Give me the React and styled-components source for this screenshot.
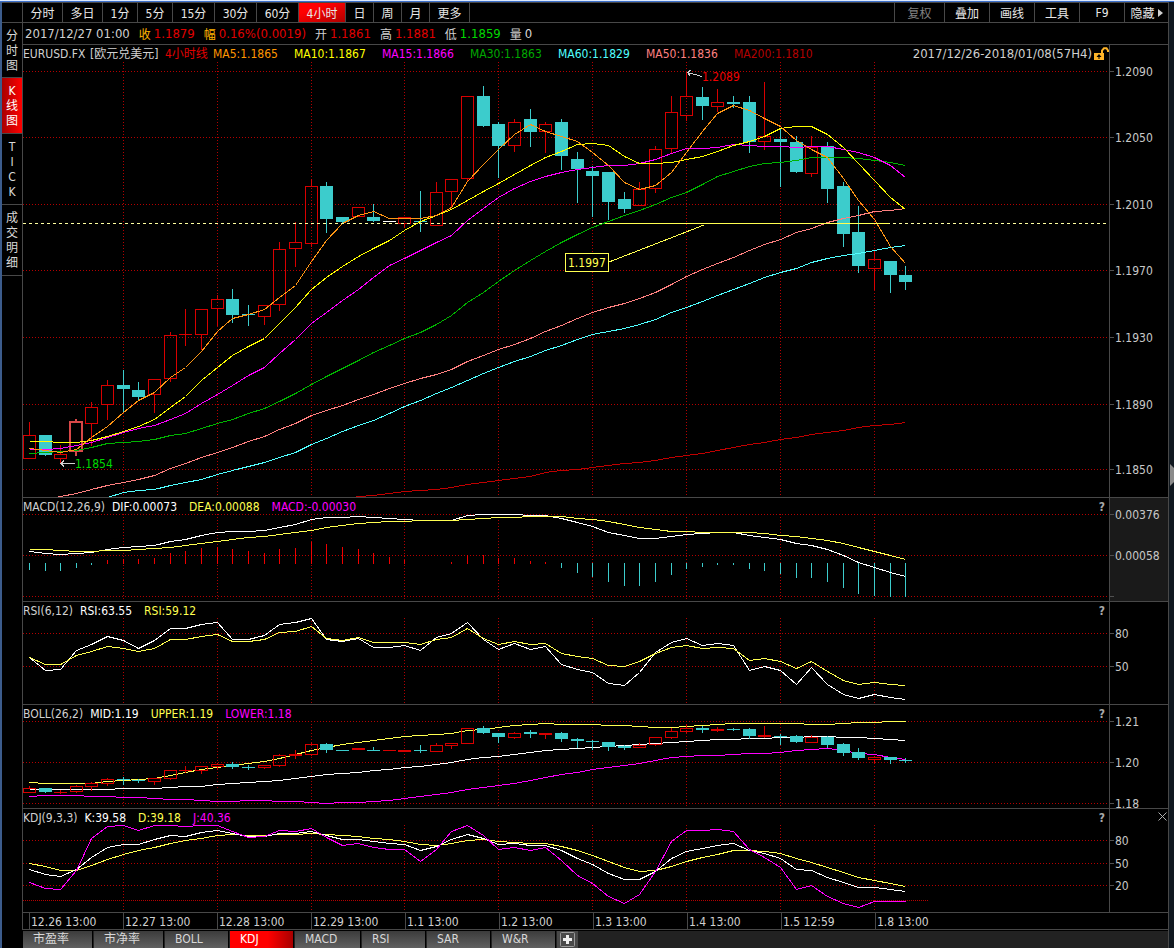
import React, { useState } from "react";
import styled, { createGlobalStyle } from "styled-components";

const FONT = `"DejaVu Sans Condensed", "Noto Sans CJK SC", sans-serif`;

const X0 = 28.87;
const STEP = 15.65;
const LEFT = 23;
const barX = (i) => Math.round(X0 + STEP * i) - LEFT;

const periods = [
  { label: "分时", w: 40 },
  { label: "多日", w: 40 },
  { label: "1分", w: 35 },
  { label: "5分", w: 35 },
  { label: "15分", w: 42 },
  { label: "30分", w: 42 },
  { label: "60分", w: 42 },
  { label: "4小时", w: 47 },
  { label: "日", w: 28 },
  { label: "周", w: 28 },
  { label: "月", w: 28 },
  { label: "更多", w: 40 },
];

const tools = [
  { label: "复权", w: 50, dim: true },
  { label: "叠加", w: 45 },
  { label: "画线", w: 45 },
  { label: "工具", w: 45 },
  { label: "F9", w: 45 },
  { label: "隐藏", w: 44, arrow: true },
];

const views = ["分时图", "K线图", "TICK", "成交明细"];

const quote = [
  { label: "收", value: "1.1879", color: "#e00000", labelColor: "#ffb400" },
  { label: "幅", value: "0.16%(0.0019)", color: "#e00000", labelColor: "#ffb400" },
  { label: "开", value: "1.1861", color: "#e00000" },
  { label: "高", value: "1.1881", color: "#e00000" },
  { label: "低", value: "1.1859", color: "#00d800" },
  { label: "量", value: "0", color: "#d8d8d8" },
];

const dates = [
  "12.26 13:00",
  "12.27 13:00",
  "12.28 13:00",
  "12.29 13:00",
  "1.1 13:00",
  "1.2 13:00",
  "1.3 13:00",
  "1.4 13:00",
  "1.5 12:59",
  "1.8 13:00",
];

const tabs = [
  { label: "市盈率", w: 70 },
  { label: "市净率", w: 70 },
  { label: "BOLL", w: 64 },
  { label: "KDJ", w: 64 },
  { label: "MACD", w: 66 },
  { label: "RSI", w: 64 },
  { label: "SAR", w: 64 },
  { label: "W&R", w: 64 },
];

// [type, high, body top, body bottom, low]
const candles = [
  ["r", 422, 435, 458, 458],
  ["c", 435, 435, 455, 455],
  ["r", 445, 454, 458, 463],
  ["s", 419, 422, 451, 455],
  ["r", 402, 407, 423, 445],
  ["r", 380, 385, 404, 419],
  ["c", 370, 385, 389, 411],
  ["c", 382, 390, 397, 399],
  ["r", 379, 379, 394, 412],
  ["r", 332, 335, 378, 381],
  ["r", 309, 334, 334, 345],
  ["r", 309, 309, 334, 349],
  ["r", 295, 299, 308, 325],
  ["c", 289, 299, 315, 322],
  ["c", 305, 314, 315, 325],
  ["r", 305, 305, 316, 324],
  ["r", 242, 249, 304, 310],
  ["r", 222, 242, 248, 266],
  ["r", 179, 186, 243, 246],
  ["c", 182, 186, 219, 232],
  ["c", 217, 217, 222, 222],
  ["r", 207, 207, 216, 216],
  ["c", 204, 217, 221, 221],
  ["w", 221, 221, 222, 221],
  ["r", 217, 217, 223, 227],
  ["c", 191, 221, 222, 231],
  ["r", 182, 192, 225, 225],
  ["r", 179, 179, 191, 207],
  ["r", 96, 96, 178, 181],
  ["c", 86, 96, 126, 126],
  ["c", 122, 124, 146, 177],
  ["r", 119, 122, 145, 151],
  ["c", 109, 119, 132, 146],
  ["r", 122, 124, 131, 152],
  ["c", 119, 122, 156, 169],
  ["c", 152, 159, 169, 202],
  ["c", 166, 171, 176, 216],
  ["c", 172, 172, 202, 219],
  ["c", 192, 199, 209, 212],
  ["r", 182, 189, 205, 205],
  ["r", 146, 149, 188, 192],
  ["r", 96, 112, 148, 153],
  ["r", 72, 96, 115, 120],
  ["c", 87, 97, 106, 119],
  ["r", 89, 102, 106, 111],
  ["c", 96, 102, 104, 107],
  ["c", 96, 102, 142, 152],
  ["r", 82, 136, 141, 149],
  ["c", 128, 139, 142, 186],
  ["c", 136, 142, 172, 172],
  ["r", 136, 147, 173, 176],
  ["c", 142, 146, 189, 202],
  ["c", 182, 186, 234, 246],
  ["c", 206, 232, 266, 272],
  ["r", 251, 259, 268, 289],
  ["c", 261, 261, 275, 292],
  ["c", 266, 275, 282, 289],
];

const toBoll = (y) => Math.round(744 + (y - 186) * 0.1775);
const bollCandles = candles.map(([t, ...v]) => [
  t === "s" || t === "w" ? "r" : t,
  ...v.map(toBoll),
]);

const maLines = [
  { color: "#c00000", from: 20, ys: [499, 496, 495, 493, 491, 490, 489, 487, 484, 482, 480, 478, 476, 472, 470, 469, 467, 465, 463, 462, 460, 457, 455, 453, 450, 447, 444, 442, 439, 437, 434, 432, 430, 427, 425, 424, 422] },
  { color: "#ff8080", from: 1, ys: [499, 496, 493, 489, 485, 482, 479, 475, 468, 463, 457, 452, 447, 441, 436, 429, 423, 415, 410, 405, 399, 394, 388, 383, 378, 374, 369, 361, 355, 349, 344, 338, 331, 325, 318, 312, 307, 303, 298, 292, 284, 276, 269, 263, 257, 250, 244, 239, 232, 228, 222, 218, 215, 211, 210, 208] },
  { color: "#50ffff", from: 5, ys: [497, 492, 490, 489, 485, 482, 479, 474, 470, 466, 462, 457, 452, 444, 438, 431, 425, 420, 413, 406, 400, 393, 387, 380, 373, 367, 361, 356, 350, 345, 339, 334, 331, 328, 324, 319, 312, 307, 301, 295, 289, 283, 277, 272, 268, 262, 258, 255, 253, 250, 247, 245] },
  { color: "#00b400", from: 0, ys: [453, 452, 451, 450, 447, 443, 442, 441, 439, 435, 433, 428, 423, 419, 413, 408, 401, 393, 384, 376, 368, 360, 352, 345, 338, 332, 324, 315, 302, 292, 281, 270, 260, 251, 242, 234, 227, 221, 215, 210, 204, 197, 192, 184, 176, 171, 166, 163, 162, 160, 157, 157, 157, 158, 160, 162, 165] },
  { color: "#ff00ff", from: 0, ys: [449, 449, 448, 445, 442, 437, 432, 428, 425, 419, 413, 403, 394, 385, 375, 367, 353, 339, 323, 312, 300, 289, 277, 265, 258, 250, 242, 235, 220, 208, 197, 188, 181, 176, 172, 169, 167, 165, 165, 163, 159, 153, 148, 148, 147, 144, 145, 146, 146, 147, 146, 146, 149, 152, 157, 165, 177] },
  { color: "#ffff00", from: 0, ys: [441, 441, 442, 442, 440, 436, 431, 426, 419, 407, 396, 380, 367, 355, 346, 338, 323, 307, 289, 277, 266, 256, 248, 240, 230, 221, 215, 209, 200, 191, 183, 174, 165, 157, 151, 144, 143, 145, 156, 163, 163, 162, 159, 156, 151, 145, 141, 136, 128, 126, 126, 134, 147, 163, 180, 197, 209] },
  { color: "#ff9614", from: 0, ys: [448, 450, 452, 449, 437, 426, 412, 400, 392, 377, 367, 351, 331, 318, 314, 309, 297, 285, 261, 240, 223, 215, 211, 218, 218, 218, 215, 207, 181, 164, 149, 134, 124, 131, 136, 141, 152, 165, 182, 189, 185, 172, 152, 131, 113, 105, 110, 118, 126, 140, 149, 157, 178, 200, 219, 246, 263] },
];

const macdLines = [
  { color: "#ffffff", ys: [551, 553, 554, 553, 552, 549, 547, 546, 545, 541, 539, 535, 532, 531, 531, 530, 527, 524, 519, 517, 517, 516, 517, 518, 519, 520, 520, 520, 515, 514, 514, 514, 515, 515, 518, 522, 526, 532, 535, 538, 538, 536, 534, 533, 532, 532, 535, 537, 539, 543, 545, 549, 555, 562, 567, 572, 576] },
  { color: "#ffff50", ys: [549, 549, 550, 551, 551, 550, 550, 549, 548, 547, 545, 543, 541, 539, 537, 536, 534, 532, 530, 527, 525, 523, 522, 521, 521, 520, 520, 520, 519, 518, 517, 517, 516, 516, 516, 518, 519, 521, 524, 527, 529, 531, 531, 532, 532, 532, 532, 533, 535, 536, 538, 540, 543, 547, 551, 555, 559] },
];

// bar ends; 563 is the zero line
const macdBars = [569, 570, 570, 567, 564, 560, 559, 559, 558, 553, 551, 548, 547, 549, 551, 553, 549, 548, 542, 544, 547, 549, 553, 557, 560, 563, 563, 562, 555, 555, 558, 558, 561, 562, 567, 572, 576, 581, 585, 585, 581, 574, 568, 566, 564, 564, 568, 570, 573, 577, 577, 581, 587, 593, 595, 596, 596];

const rsiLines = [
  { color: "#ffffff", ys: [657, 670, 669, 650, 644, 636, 640, 648, 640, 628, 628, 624, 622, 639, 639, 635, 624, 622, 618, 639, 641, 638, 647, 647, 645, 650, 637, 633, 622, 639, 649, 643, 649, 646, 664, 669, 672, 683, 685, 672, 652, 642, 638, 645, 643, 645, 670, 666, 670, 684, 667, 684, 694, 698, 694, 697, 699] },
  { color: "#ffff50", ys: [657, 664, 664, 655, 651, 646, 648, 651, 648, 639, 639, 636, 634, 641, 641, 639, 632, 631, 626, 638, 640, 637, 642, 642, 642, 644, 639, 637, 628, 638, 644, 641, 644, 643, 653, 656, 658, 665, 666, 661, 653, 647, 645, 648, 647, 648, 660, 658, 661, 668, 661, 671, 680, 684, 682, 684, 685] },
];

const bollLines = [
  { color: "#ffff50", ys: [782, 783, 783, 783, 783, 781, 780, 779, 778, 775, 772, 769, 767, 765, 763, 761, 758, 754, 750, 747, 744, 742, 740, 738, 736, 735, 734, 733, 730, 729, 727, 725, 724, 723, 724, 724, 724, 725, 725, 726, 727, 727, 726, 725, 724, 723, 723, 723, 723, 723, 724, 724, 723, 722, 722, 721, 721] },
  { color: "#ffffff", ys: [789, 789, 789, 789, 789, 789, 788, 788, 788, 787, 786, 786, 784, 783, 782, 781, 780, 778, 776, 774, 773, 772, 770, 769, 767, 766, 764, 762, 759, 757, 756, 754, 752, 750, 749, 748, 747, 746, 745, 744, 743, 742, 741, 740, 739, 739, 738, 738, 737, 737, 736, 736, 737, 737, 738, 739, 740] },
  { color: "#ff00ff", ys: [796, 795, 795, 795, 796, 796, 797, 797, 798, 799, 799, 800, 801, 801, 800, 800, 801, 801, 802, 803, 802, 802, 801, 800, 798, 796, 794, 792, 789, 787, 785, 783, 780, 777, 774, 772, 769, 767, 765, 763, 760, 757, 756, 755, 755, 754, 753, 753, 752, 750, 749, 748, 750, 753, 754, 757, 759] },
];

const kdjLines = [
  { color: "#ffff50", ys: [863, 866, 870, 870, 865, 859, 854, 850, 847, 843, 840, 838, 835, 834, 835, 835, 834, 834, 833, 834, 835, 836, 838, 839, 841, 844, 845, 843, 840, 839, 841, 842, 843, 843, 846, 850, 855, 861, 867, 871, 870, 866, 861, 857, 854, 850, 850, 851, 853, 858, 862, 867, 872, 877, 880, 883, 886] },
  { color: "#ffffff", ys: [869, 874, 876, 869, 857, 847, 844, 844, 839, 835, 836, 832, 830, 833, 836, 836, 833, 833, 831, 835, 839, 839, 841, 843, 844, 850, 846, 839, 834, 838, 844, 843, 845, 845, 850, 858, 864, 873, 879, 879, 871, 858, 851, 848, 845, 843, 850, 853, 858, 869, 870, 877, 882, 887, 887, 889, 891] },
  { color: "#ff00ff", ys: [882, 888, 889, 870, 838, 826, 825, 830, 825, 825, 826, 825, 825, 831, 837, 836, 830, 831, 828, 837, 845, 843, 847, 849, 849, 861, 849, 831, 825, 835, 849, 847, 850, 847, 860, 875, 883, 896, 903, 894, 871, 841, 830, 830, 829, 831, 849, 857, 867, 889, 885, 896, 903, 907, 901, 901, 901] },
];

function Grid({ top, height, rows, from = 0 }) {
  return (
    <g stroke="#b40000" strokeDasharray="1 2">
      {rows.map((y) => (
        <line key={y} x1="0" x2="100%" y1={y - top + 0.5} y2={y - top + 0.5} />
      ))}
      {dates.slice(1).map((d, i) => {
        const x = barX((i + 1) * 6) + 0.5;
        return <line key={d} x1={x} x2={x} y1={from} y2={height} />;
      })}
    </g>
  );
}

function Lines({ top, lines }) {
  return lines.map(({ color, ys, from = 0 }) => (
    <polyline
      key={color}
      fill="none"
      stroke={color}
      points={ys.map((y, i) => `${barX(i + from) + 0.5},${y - top + 0.5}`).join(" ")}
    />
  ));
}

function Candles({ top, data }) {
  return data.map(([type, hi, a, b, lo], i) => {
    const x = barX(i);
    const y = (v) => v - top;
    if (type === "w") {
      return <rect key={i} x={x - 6} y={y(a)} width="13" height="1" fill="#fff" />;
    }
    if (type === "c") {
      return (
        <g key={i} fill="#3ccccc">
          <rect x={x} y={y(hi)} width="1" height={lo - hi + 1} />
          <rect x={x - 6} y={y(a)} width="13" height={Math.max(b - a, 1)} />
        </g>
      );
    }
    if (type === "s") {
      return (
        <g key={i} stroke="#d84848" strokeWidth="2" fill="none">
          <line x1={x} x2={x} y1={y(hi)} y2={y(a)} />
          <line x1={x} x2={x} y1={y(b)} y2={y(lo) + 1} />
          <rect x={x - 6} y={y(a)} width="12" height={b - a} />
        </g>
      );
    }
    return (
      <g key={i} stroke="#d80000" fill="none">
        <line x1={x + 0.5} x2={x + 0.5} y1={y(hi)} y2={y(a)} />
        <line x1={x + 0.5} x2={x + 0.5} y1={y(b)} y2={y(lo) + 1} />
        <rect x={x - 5.5} y={y(a) + 0.5} width="12" height={Math.max(b - a, 0.1)} />
      </g>
    );
  });
}

function Panel({ top, height, title, titleExtra, rows, labels, active, close, from, help = true, children }) {
  return (
    <PanelRow>
      <Plot>
        <PanelHead>
          {title}
          {help && <HelpButton aria-label="指标说明">?</HelpButton>}
          {titleExtra}
        </PanelHead>
        <Canvas height={height} shapeRendering="crispEdges">
          <Grid top={top} height={height} rows={rows} from={from} />
          {children}
        </Canvas>
      </Plot>
      <Scale $active={active}>
        {close && (
          <CloseButton aria-label="关闭">
            <svg width="9" height="9" stroke="#b0b0b0">
              <path d="M0.5 0.5L8.5 8.5M8.5 0.5L0.5 8.5" />
            </svg>
          </CloseButton>
        )}
        <ScaleCanvas height={height}>
          {labels.map(([y, text]) => (
            <g key={y}>
              <rect x="0" y={y - top} width="4" height="1" fill="#505050" />
              <text x="5" y={y - top + 5} fill="#c8c8c8">
                {text}
              </text>
            </g>
          ))}
        </ScaleCanvas>
      </Scale>
    </PanelRow>
  );
}

const LockIcon = () => (
  <svg width="15" height="14" viewBox="0 0 15 14">
    <path d="M8 6V3.5L10 1.2H12.5L14 3.5V5" fill="none" stroke="#ffb428" strokeWidth="2" />
    <rect x="0" y="6" width="10" height="7" fill="#ffb428" />
    <path d="M5 7L7.5 10H2.5ZM4.5 9H5.5V12H4.5Z" fill="#000" />
  </svg>
);

export default function App() {
  const [period, setPeriod] = useState("4小时");
  const [view, setView] = useState("K线图");
  const [tab, setTab] = useState("KDJ");

  return (
    <>
      <GlobalStyle />
      <TopStrip />
      <Window>
        <Side>
          {views.map((v) => (
            <SideButton key={v} $on={v === view} onClick={() => setView(v)}>
              {[...v].map((ch, i) => (
                <span key={i}>{ch}</span>
              ))}
            </SideButton>
          ))}
        </Side>
        <Main>
          <Toolbar>
            {periods.map(({ label, w }) => (
              <ToolButton key={label} $w={w} $on={label === period} onClick={() => setPeriod(label)}>
                {label}
              </ToolButton>
            ))}
            <Spacer />
            {tools.map(({ label, w, dim, arrow }) => (
              <ToolButton key={label} $w={w} $dim={dim} $right>
                {label}
                {arrow && (
                  <svg width="5" height="8">
                    <path d="M0 0L5 4L0 8Z" fill="#d0d0d0" />
                  </svg>
                )}
              </ToolButton>
            ))}
          </Toolbar>

          <QuoteBar>
            <QuoteItem>2017/12/27 01:00</QuoteItem>
            {quote.map((q) => (
              <QuoteItem key={q.label} $color={q.color}>
                <Cjk $color={q.labelColor || "#d0d0d0"}>{q.label}</Cjk>
                {q.value}
              </QuoteItem>
            ))}
          </QuoteBar>

          <Panel
            top={61}
            height={436}
            from={-2}
            help={false}
            rows={[71, 137, 204, 270, 337, 404, 469]}
            labels={[
              [71, "1.2090"],
              [137, "1.2050"],
              [204, "1.2010"],
              [270, "1.1970"],
              [337, "1.1930"],
              [404, "1.1890"],
              [469, "1.1850"],
            ]}
            title={
              <>
                <Symbol>EURUSD.FX</Symbol>
                <Name>[欧元兑美元]</Name>
                <Name $color="#e00000">4小时线</Name>
                <MaLabel $color="#ff9600" $short>MA5:1.1865</MaLabel>
                <MaLabel $color="#ffff00">MA10:1.1867</MaLabel>
                <MaLabel $color="#ff00ff">MA15:1.1866</MaLabel>
                <MaLabel $color="#00a800">MA30:1.1863</MaLabel>
                <MaLabel $color="#50ffff">MA60:1.1829</MaLabel>
                <MaLabel $color="#ff8080">MA50:1.1836</MaLabel>
                <MaLabel $color="#b40000">MA200:1.1810</MaLabel>
              </>
            }
            titleExtra={
              <Range>
                2017/12/26-2018/01/08(57H4)
                <LockIcon />
              </Range>
            }
          >
            <Candles top={61} data={candles} />
            <Lines top={61} lines={maLines} />
            <line x1="0" x2="100%" y1="162.5" y2="162.5" stroke="#ffffa0" strokeDasharray="3 3" />
            <line x1="582" x2="866" y1="162.5" y2="162.5" stroke="#ffff50" />
            <line x1="586" x2="681" y1="201" y2="164" stroke="#ffff50" />
            <rect x="542.5" y="192.5" width="43" height="18" fill="#000" stroke="#ffff50" />
            <text x="545" y="206" fill="#ffff50">1.1997</text>
            <path d="M664.5 11.5L679 15.5M668 9L664.5 11.5L667 15" fill="none" stroke="#d0d0d0" />
            <text x="679" y="20" fill="#f00000">1.2089</text>
            <path d="M38 402.5H52M41 399.5L38 402.5L41 405.5" fill="none" stroke="#d0d0d0" />
            <text x="52" y="407" fill="#00d800">1.1854</text>
          </Panel>

          <Panel
            top={514}
            height={87}
            active
            rows={[514, 555, 596]}
            labels={[
              [514, "0.00376"],
              [555, "0.00058"],
              [596, ""],
            ]}
            title={
              <>
                <Label>MACD(12,26,9)</Label>
                <Value $color="#fff">DIF:0.00073</Value>
                <Value $color="#ffff50">DEA:0.00088</Value>
                <Value $color="#ff00ff">MACD:-0.00030</Value>
              </>
            }
          >
            {macdBars.map((y, i) =>
              y === 563 ? null : (
                <rect
                  key={i}
                  x={barX(i)}
                  y={Math.min(y, 563) - 514}
                  width="1"
                  height={Math.abs(y - 563) + 1}
                  fill={y < 563 ? "#f00000" : "#3ccccc"}
                />
              )
            )}
            <Lines top={514} lines={macdLines} />
          </Panel>

          <Panel
            top={618}
            height={86}
            rows={[633, 666]}
            labels={[
              [633, "80"],
              [666, "50"],
            ]}
            title={
              <>
                <Label>RSI(6,12)</Label>
                <Value $color="#fff">RSI:63.55</Value>
                <Value $color="#ffff50">RSI:59.12</Value>
              </>
            }
          >
            <Lines top={618} lines={rsiLines} />
          </Panel>

          <Panel
            top={721}
            height={87}
            rows={[721, 762, 803]}
            labels={[
              [721, "1.21"],
              [762, "1.20"],
              [803, "1.18"],
            ]}
            title={
              <>
                <Label>BOLL(26,2)</Label>
                <Value $color="#fff">MID:1.19</Value>
                <Value $color="#ffff50">UPPER:1.19</Value>
                <Value $color="#ff00ff">LOWER:1.18</Value>
              </>
            }
          >
            <Lines top={721} lines={bollLines} />
            <Candles top={721} data={bollCandles} />
          </Panel>

          <Panel
            top={825}
            height={87}
            close
            rows={[840, 863, 885]}
            labels={[
              [840, "80"],
              [863, "50"],
              [885, "20"],
            ]}
            title={
              <>
                <Label>KDJ(9,3,3)</Label>
                <Value $color="#fff">K:39.58</Value>
                <Value $color="#ffff50">D:39.18</Value>
                <Value $color="#ff00ff">J:40.36</Value>
              </>
            }
          >
            <line x1="0" x2="905" y1="75.5" y2="75.5" stroke="#b40000" strokeDasharray="1 1" />
            <Lines top={825} lines={kdjLines} />
          </Panel>

          <DateAxis>
            {dates.map((d) => (
              <DateCell key={d}>{d}</DateCell>
            ))}
          </DateAxis>

          <TabBar>
            {tabs.map(({ label, w }) => (
              <Tab key={label} $w={w} $on={label === tab} onClick={() => setTab(label)}>
                {label}
              </Tab>
            ))}
            <AddTab aria-label="添加指标">
              <svg width="15" height="15">
                <rect x="0.5" y="0.5" width="14" height="14" rx="1" fill="#4a4a4a" stroke="#999" />
                <path d="M7.5 3V12M3 7.5H12" stroke="#eee" strokeWidth="3" />
              </svg>
            </AddTab>
          </TabBar>
        </Main>
        <Splitter aria-label="展开侧栏">
          <svg width="4" height="22">
            <path d="M0 0L4 4V18L0 22Z" fill="#8a8a8a" />
          </svg>
        </Splitter>
      </Window>
    </>
  );
}

const GlobalStyle = createGlobalStyle`
  * {
    box-sizing: border-box;
  }
  body {
    margin: 0;
    background: #000;
    color: #d0d0d0;
    font-family: ${FONT};
    font-size: 12px;
  }
  button {
    margin: 0;
    padding: 0;
    border: 0;
    background: none;
    color: inherit;
    font: inherit;
    cursor: pointer;
  }
  svg {
    display: block;
    flex: none;
  }
`;

const TopStrip = styled.div`
  height: 2px;
  background: linear-gradient(#dce8fc 50%, #3c70cc 50%);
`;

const Window = styled.div`
  display: flex;
  min-height: calc(100vh - 2px);
  border-left: 2px solid #3c5c8c;
`;

const Side = styled.nav`
  flex: 0 0 20px;
  padding-top: 19px;
  border-top: 1px solid #484848;
  display: flex;
  flex-direction: column;
`;

const SideButton = styled.button`
  display: flex;
  flex-direction: column;
  align-items: center;
  padding: 6px 0 4px;
  line-height: 15px;
  border-bottom: 1px solid #484848;
  color: ${(props) => (props.$on ? "#fff" : "#d8d8d8")};
  background: ${(props) =>
    props.$on ? "linear-gradient(90deg, #a80000, #ff0000)" : "none"};

  &:first-child {
    border-top: 1px solid #484848;
    padding-bottom: 3px;
  }
`;

const Main = styled.main`
  flex: 1;
  min-width: 0;
  border-right: 1px solid #484848;
`;

const Toolbar = styled.div`
  display: flex;
  height: 21px;
  border: solid #484848;
  border-width: 1px 0 1px 1px;
`;

const Spacer = styled.div`
  flex: 1;
`;

const ToolButton = styled.button`
  display: flex;
  align-items: center;
  justify-content: center;
  gap: 3px;
  width: ${(props) => props.$w}px;
  border: solid #484848;
  border-width: ${(props) => (props.$right ? "0 0 0 1px" : "0 1px 0 0")};
  color: ${(props) => (props.$dim ? "#808080" : "#e8e8e8")};
  background: ${(props) =>
    props.$on ? "linear-gradient(160deg, #ff0000 30%, #b00000)" : "none"};
`;

const QuoteBar = styled.div`
  display: flex;
  align-items: center;
  gap: 9px;
  height: 21px;
  padding-left: 2px;
  border-left: 1px solid #484848;
  font-size: 13px;
`;

const QuoteItem = styled.span`
  display: flex;
  align-items: center;
  gap: 3px;
  color: ${(props) => props.$color || "#d0d0d0"};
`;

const Cjk = styled.span`
  font-size: 12px;
  color: ${(props) => props.$color};
`;

const PanelRow = styled.section`
  display: flex;
  border-top: 1px solid #484848;
  border-left: 1px solid #484848;
`;

const Plot = styled.div`
  flex: 1;
  min-width: 0;
`;

const PanelHead = styled.header`
  display: flex;
  align-items: center;
  height: 16px;
  line-height: 16px;
  padding-top: 2px;
  white-space: nowrap;
`;

const Canvas = styled.svg`
  width: 100%;
  overflow: hidden;
  font-family: ${FONT};
  font-size: 12px;
`;

const ScaleCanvas = styled(Canvas)`
  overflow: visible;
`;

const Scale = styled.div`
  position: relative;
  flex: 0 0 59px;
  padding-top: 16px;
  border-left: 1px solid #484848;
  background: ${(props) => (props.$active ? "#1a1a1a" : "none")};
`;

const HelpButton = styled.button`
  margin-left: auto;
  padding-right: 4px;
  font-weight: bold;
  line-height: 14px;
  color: #a8a8a8;
`;

const CloseButton = styled.button`
  position: absolute;
  top: 3px;
  right: 1px;
`;

const Symbol = styled.span`
  min-width: 67px;
`;

const Name = styled.span`
  min-width: 75px;
  color: ${(props) => props.$color || "inherit"};

  & + & {
    min-width: 48px;
  }
`;

const MaLabel = styled.span`
  min-width: ${(props) => (props.$short ? 81 : 88)}px;
  color: ${(props) => props.$color};
`;

const Range = styled.span`
  display: flex;
  align-items: center;
  gap: 2px;
  margin-left: auto;
  font-size: 13px;
`;

const Label = styled.span`
  margin-right: 7px;
`;

const Value = styled.span`
  margin-right: 12px;
  color: ${(props) => props.$color};
`;

const DateAxis = styled.div`
  display: flex;
  height: 18px;
  padding-left: 6px;
  border: solid #484848;
  border-width: 1px 0 1px 1px;
`;

const DateCell = styled.span`
  flex: 0 0 94px;
  padding-left: 1px;
  border-left: 1px solid #484848;
  line-height: 19px;
  white-space: nowrap;
`;

const TabBar = styled.div`
  display: flex;
  gap: 1px;
  height: 17px;
  margin: 1px 0 0 1px;
  background: #222;
`;

const Tab = styled.button`
  width: ${(props) => props.$w}px;
  padding-left: 10px;
  text-align: left;
  line-height: 17px;
  color: ${(props) => (props.$on ? "#fff" : "#d8d8d8")};
  border-right: 1px solid #000;
  background: ${(props) =>
    props.$on
      ? "linear-gradient(90deg, #ff0000 60%, #a80000)"
      : "linear-gradient(#3c3c3c, #606060)"};
`;

const AddTab = styled.button`
  display: flex;
  align-items: center;
  justify-content: center;
  width: 21px;
  background: #484848;
`;

const Splitter = styled.button`
  flex: 0 0 5px;
  display: flex;
  align-items: center;
  justify-content: flex-end;
  background: #10181f;
`;
